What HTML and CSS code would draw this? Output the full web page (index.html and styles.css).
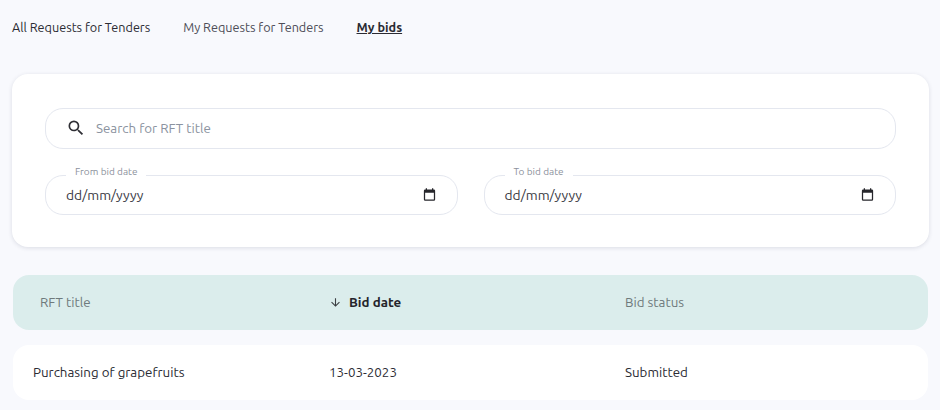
FILE: index.html
```html
<!DOCTYPE html>
<html lang="en">
<head>
  <meta charset="UTF-8">
  <title>My bids</title>
  <link rel="stylesheet" href="styles.css">
</head>
<body>
  <nav class="tabs">
    <a class="tab">All Requests for Tenders</a>
    <a class="tab tab-muted">My Requests for Tenders</a>
    <a class="tab tab-active">My bids</a>
  </nav>

  <section class="filter-card">
    <div class="search-box">
      <svg class="search-icon" viewBox="0 0 24 24" width="20" height="20">
        <path d="M15.5 14h-.79l-.28-.27A6.47 6.47 0 0 0 16 9.5 6.5 6.5 0 1 0 9.5 16c1.61 0 3.09-.59 4.23-1.57l.27.28v.79l5 4.99L20.49 19l-4.99-5zm-6 0C7.01 14 5 11.99 5 9.5S7.01 5 9.5 5 14 7.01 14 9.5 11.99 14 9.5 14z"/>
      </svg>
      <span class="search-placeholder">Search for RFT title</span>
    </div>
    <div class="date-row">
      <div class="date-field">
        <span class="date-label">From bid date</span>
        <span class="date-value">dd/mm/yyyy</span>
        <svg class="cal-icon" viewBox="0 0 24 24" width="15" height="15">
          <path d="M19 4h-1V2h-2v2H8V2H6v2H5a2 2 0 0 0-2 2v14a2 2 0 0 0 2 2h14a2 2 0 0 0 2-2V6a2 2 0 0 0-2-2zm0 16H5V9h14v11z"/>
        </svg>
      </div>
      <div class="date-field">
        <span class="date-label">To bid date</span>
        <span class="date-value">dd/mm/yyyy</span>
        <svg class="cal-icon" viewBox="0 0 24 24" width="15" height="15">
          <path d="M19 4h-1V2h-2v2H8V2H6v2H5a2 2 0 0 0-2 2v14a2 2 0 0 0 2 2h14a2 2 0 0 0 2-2V6a2 2 0 0 0-2-2zm0 16H5V9h14v11z"/>
        </svg>
      </div>
    </div>
  </section>

  <div class="table-head">
    <div class="col-title head-title">RFT title</div>
    <div class="col-date head-sorted">
      <svg class="sort-icon" viewBox="0 0 24 24" width="13" height="13">
        <path d="M20 12l-1.41-1.41L13 16.17V4h-2v12.17l-5.58-5.59L4 12l8 8 8-8z"/>
      </svg>
      Bid date
    </div>
    <div class="col-status">Bid status</div>
  </div>

  <div class="table-row">
    <div class="col-title">Purchasing of grapefruits</div>
    <div class="col-date">13-03-2023</div>
    <div class="col-status">Submitted</div>
  </div>
</body>
</html>
```

FILE: styles.css
```css
* {
  box-sizing: border-box;
}

body {
  margin: 0;
  padding: 0 11px 0 12px;
  background-color: #f8f9fd;
  color: #2b2b33;
  font-family: Ubuntu, "Noto Sans", "Open Sans", sans-serif;
  font-size: 13.35px;
}

.tabs {
  display: flex;
  gap: 33px;
  height: 74px;
  padding-top: 18px;
  font-size: 12.65px;
  line-height: 18px;
}

.tab {
  color: #2b2b33;
}

.tab-muted {
  color: #4d4d57;
}

.tab-active {
  font-weight: bold;
  text-decoration: underline;
}

.filter-card {
  height: 173px;
  padding: 34px 33px;
  background-color: white;
  border-radius: 16px;
  box-shadow: 0 1px 4px rgba(40, 50, 80, 0.14);
}

.search-box {
  display: flex;
  align-items: center;
  height: 41px;
  padding-left: 20px;
  padding-bottom: 1px;
  border: 1px solid #e4e7ef;
  border-radius: 18px;
}

.search-icon {
  fill: #2f2f35;
}

.search-placeholder {
  margin-left: 10px;
  color: #8b93a0;
}

.date-row {
  display: grid;
  grid-template-columns: 1fr 1fr;
  gap: 26px;
  margin-top: 26px;
}

.date-field {
  position: relative;
  display: flex;
  align-items: center;
  justify-content: space-between;
  height: 40px;
  padding: 0 20px 1px;
  border: 1px solid #e4e7ef;
  border-radius: 18px;
}

.date-label {
  position: absolute;
  top: -11px;
  left: 20px;
  padding: 0 9px;
  background-color: white;
  color: #8b919c;
  font-size: 10px;
  line-height: 14px;
}

.date-value {
  color: #3a3a44;
  font-size: 13.8px;
}

.cal-icon {
  fill: #26262b;
}

.table-head,
.table-row {
  display: grid;
  grid-template-columns: 316px 296px 1fr;
  align-items: center;
  margin: 0 1px;
  padding-bottom: 1px;
  border-radius: 16px;
}

.table-head {
  height: 55px;
  margin-top: 28px;
  background-color: #dbedec;
  color: #6f7a7c;
}

.table-row {
  height: 55px;
  margin-top: 15px;
  background-color: white;
}

.col-title {
  padding-left: 20px;
}

.head-title {
  padding-left: 27px;
}

.head-sorted {
  display: flex;
  align-items: center;
  gap: 7px;
  color: #25252b;
  font-weight: bold;
}

.sort-icon {
  fill: #3b3f42;
}
```
